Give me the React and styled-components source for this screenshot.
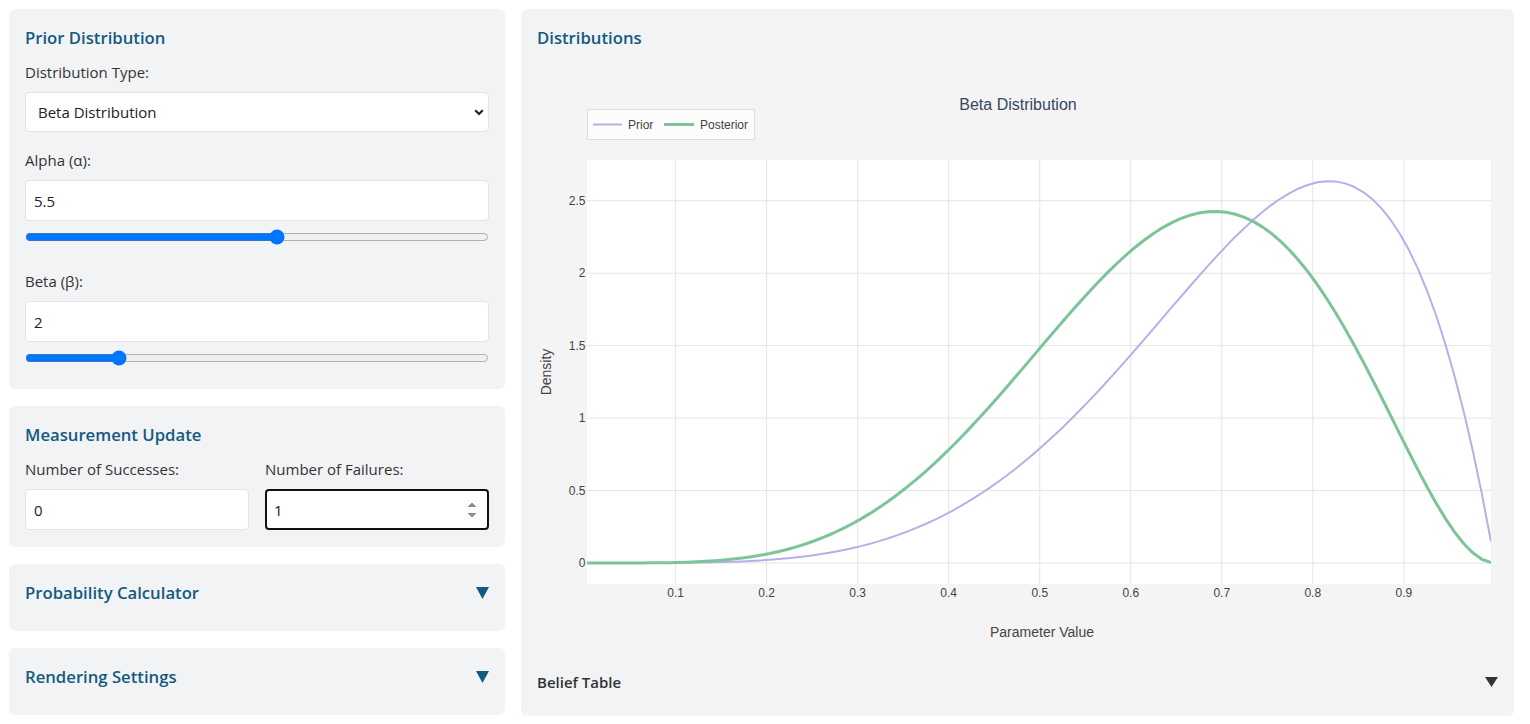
import React from 'react'
import styled, { createGlobalStyle } from 'styled-components'

const GlobalStyle = createGlobalStyle`
  html, body {
    margin: 0;
    padding: 0;
    background: #fff;
  }
  body {
    font-family: "Open Sans", "Noto Sans", sans-serif;
    color: #333;
  }
  * {
    box-sizing: border-box;
  }
`

const Page = styled.div`
  display: grid;
  grid-template-columns: 496px 1fr;
  gap: 16px;
  align-items: start;
  padding: 9px 16px 0 9px;
`

const Sidebar = styled.div`
  display: flex;
  flex-direction: column;
  gap: 17px;
`

const Card = styled.section`
  background: #f2f3f5;
  border-radius: 6px;
  padding: 16px 16px ${p => p.$padBottom ?? 16}px;
`

const CardTitle = styled.h2`
  display: flex;
  justify-content: space-between;
  align-items: center;
  margin: 0 0 10px;
  font-size: 16.7px;
  line-height: 25px;
  font-weight: 600;
  color: #135a80;
`

const FormGroup = styled.div`
  display: flex;
  flex-direction: column;
  margin-bottom: 16px;
  &:last-child {
    margin-bottom: 0;
  }
`

const Label = styled.label`
  display: block;
  margin-bottom: 8px;
  font-size: 15px;
  line-height: 24px;
  color: #333;
`

const SelectWrap = styled.div`
  position: relative;
`

const Select = styled.select`
  appearance: none;
  display: block;
  width: 100%;
  height: 40px;
  padding: 0 12px;
  border: 1px solid #e2e4e7;
  border-radius: 4px;
  background: #fff;
  font-family: inherit;
  font-size: 15px;
  color: #222;
`

const Chevron = styled.svg`
  position: absolute;
  right: 5px;
  top: 17px;
  pointer-events: none;
`

const Input = styled.input`
  display: block;
  width: 100%;
  height: 41px;
  padding: 0 ${p => (p.$focused ? 7 : 8)}px;
  border: ${p => (p.$focused ? '2px solid #111' : '1px solid #e2e4e7')};
  border-radius: 4px;
  background: #fff;
  font-family: inherit;
  font-size: 15px;
  color: #222;
  outline: none;
`

const Range = styled.input`
  display: block;
  width: 100%;
  height: 16px;
  margin: 8px 0;
  accent-color: #0075ff;
`

const Columns = styled.div`
  display: grid;
  grid-template-columns: 1fr 1fr;
  gap: 16px;
`

const ChartBox = styled.div`
  height: 583px;
  margin-right: -9px;
  background: #f4f4f5;
  svg {
    display: block;
  }
`

const BeliefRow = styled.div`
  display: flex;
  justify-content: space-between;
  align-items: center;
  height: 25px;
  margin: 26px 0 6px;
  font-size: 15px;
  font-weight: 600;
  color: #333;
`

const Triangle = ({ w = 13, h = 12, color }) => (
  <svg width={w} height={h} viewBox={`0 0 ${w} ${h}`}>
    <polygon points={`0,0 ${w},0 ${w / 2},${h}`} fill={color} />
  </svg>
)

// beta density via log-gamma
const lgamma = z => {
  const g = 7
  const c = [0.99999999999980993, 676.5203681218851, -1259.1392167224028, 771.32342877765313,
    -176.61502916214059, 12.507343278686905, -0.13857109526572012, 9.9843695780195716e-6, 1.5056327351493116e-7]
  if (z < 0.5) return Math.log(Math.PI / Math.sin(Math.PI * z)) - lgamma(1 - z)
  z -= 1
  let x = c[0]
  for (let i = 1; i < g + 2; i++) x += c[i] / (z + i)
  const t = z + g + 0.5
  return 0.5 * Math.log(2 * Math.PI) + (z + 0.5) * Math.log(t) - t + Math.log(x)
}
const betaPdf = (x, a, b) =>
  Math.exp((a - 1) * Math.log(x) + (b - 1) * Math.log(1 - x) + lgamma(a + b) - lgamma(a) - lgamma(b))

const W = 970
const H = 583
const L = 50
const T = 100
const R = 954
const B = 524
const X0 = 0.0026
const X1 = 0.9958
const Y0 = -0.145
const Y1 = 2.781
const sx = v => L + ((v - X0) / (X1 - X0)) * (R - L)
const sy = v => T + ((Y1 - v) / (Y1 - Y0)) * (B - T)

const curve = (a, b) => {
  const n = 100
  const pts = []
  for (let i = 0; i < n; i++) {
    const x = X0 + ((X1 - X0) * i) / (n - 1)
    pts.push(`${sx(x).toFixed(2)},${sy(betaPdf(x, a, b)).toFixed(2)}`)
  }
  return 'M' + pts.join('L')
}

const xTicks = [0.1, 0.2, 0.3, 0.4, 0.5, 0.6, 0.7, 0.8, 0.9]
const yTicks = [0, 0.5, 1, 1.5, 2, 2.5]
const PRIOR = '#b5b1e8'
const POSTERIOR = '#7cc598'
const chartFont = '"Liberation Sans", Arial, sans-serif'

const Chart = ({ alpha, beta, successes, failures }) => (
  <svg width={W} height={H} fontFamily={chartFont}>
    <defs>
      <clipPath id="plot">
        <rect x={L} y={T} width={R - L} height={B - T} />
      </clipPath>
    </defs>
    <rect x={L} y={T} width={R - L} height={B - T} fill="#fff" />
    {xTicks.map(t => (
      <line key={t} x1={sx(t)} x2={sx(t)} y1={T} y2={B} stroke="#e5e5e5" />
    ))}
    {yTicks.map(t => (
      <line key={t} x1={L} x2={R} y1={sy(t)} y2={sy(t)} stroke="#e5e5e5" />
    ))}
    <g clipPath="url(#plot)" fill="none" strokeLinejoin="round">
      <path d={curve(alpha, beta)} stroke={PRIOR} strokeWidth="2" />
      <path d={curve(alpha + successes, beta + failures)} stroke={POSTERIOR} strokeWidth="3" />
    </g>
    <g fontSize="12" fill="#444">
      {xTicks.map(t => (
        <text key={t} x={sx(t)} y={533} textAnchor="middle" dominantBaseline="central">
          {t}
        </text>
      ))}
      {yTicks.map(t => (
        <text key={t} x={48.5} y={sy(t)} textAnchor="end" dominantBaseline="central">
          {t}
        </text>
      ))}
    </g>
    <text x={481} y={44.5} fontSize="16" fill="#34495e" textAnchor="middle" dominantBaseline="central">
      Beta Distribution
    </text>
    <text x={505} y={572} fontSize="14" fill="#444" textAnchor="middle" dominantBaseline="central">
      Parameter Value
    </text>
    <text
      x={9}
      y={312}
      fontSize="14"
      fill="#444"
      textAnchor="middle"
      dominantBaseline="central"
      transform="rotate(-90 9 312)"
    >
      Density
    </text>
    <g>
      <rect x={50.5} y={49.5} width={167} height={30} fill="#fcfcfc" stroke="#dedede" />
      <line x1={56} x2={85} y1={64.5} y2={64.5} stroke={PRIOR} strokeWidth="2" />
      <text x={91} y={64.5} fontSize="12" fill="#444" dominantBaseline="central">Prior</text>
      <line x1={127} x2={157} y1={64.5} y2={64.5} stroke={POSTERIOR} strokeWidth="3" />
      <text x={163} y={64.5} fontSize="12" fill="#444" dominantBaseline="central">Posterior</text>
    </g>
  </svg>
)

const App = () => {
  const alpha = 5.5
  const beta = 2
  const successes = 0
  const failures = 1

  return (
    <>
      <GlobalStyle />
      <Page>
        <Sidebar>
          <Card $padBottom={15}>
            <CardTitle>Prior Distribution</CardTitle>
            <FormGroup>
              <Label>Distribution Type:</Label>
              <SelectWrap>
                <Select defaultValue="beta">
                  <option value="beta">Beta Distribution</option>
                  <option value="normal">Normal Distribution</option>
                </Select>
                <Chevron width="10" height="7" viewBox="0 0 10 7">
                  <path d="M1.2 1.2 L5 5 L8.8 1.2" fill="none" stroke="#222" strokeWidth="2.2" />
                </Chevron>
              </SelectWrap>
            </FormGroup>
            <FormGroup>
              <Label>Alpha (α):</Label>
              <Input type="number" defaultValue={alpha} step="0.1" />
              <Range type="range" min="0.1" max="10" step="0.1" defaultValue={alpha} />
            </FormGroup>
            <FormGroup>
              <Label>Beta (β):</Label>
              <Input type="number" defaultValue={beta} step="0.1" />
              <Range type="range" min="0.1" max="10" step="0.1" defaultValue={beta} />
            </FormGroup>
          </Card>

          <Card $padBottom={17}>
            <CardTitle>Measurement Update</CardTitle>
            <Columns>
              <div>
                <Label>Number of Successes:</Label>
                <Input type="number" defaultValue={successes} min="0" />
              </div>
              <div>
                <Label>Number of Failures:</Label>
                <Input type="number" defaultValue={failures} min="0" $focused autoFocus />
              </div>
            </Columns>
          </Card>

          <Card>
            <CardTitle>
              Probability Calculator
              <Triangle color="#135a80" />
            </CardTitle>
          </Card>

          <Card>
            <CardTitle>
              Rendering Settings
              <Triangle color="#135a80" />
            </CardTitle>
          </Card>
        </Sidebar>

        <Card>
          <CardTitle>Distributions</CardTitle>
          <ChartBox>
            <Chart alpha={alpha} beta={beta} successes={successes} failures={failures} />
          </ChartBox>
          <BeliefRow>
            Belief Table
            <Triangle w={13} h={10} color="#333" />
          </BeliefRow>
        </Card>
      </Page>
    </>
  )
}

export default App
